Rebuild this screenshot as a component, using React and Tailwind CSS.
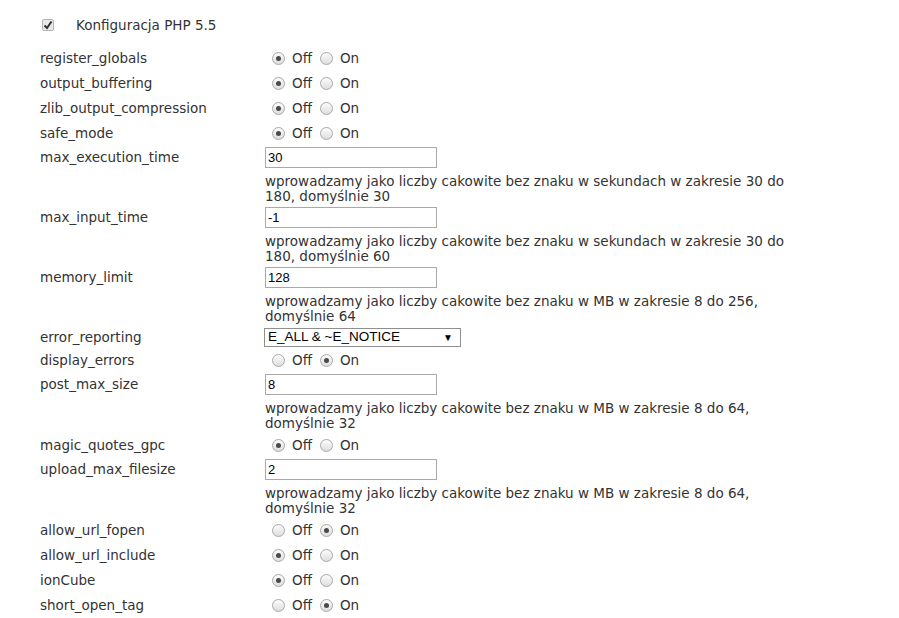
const radios = {
  register_globals: 'off',
  output_buffering: 'off',
  zlib_output_compression: 'off',
  safe_mode: 'off',
};

function Radio({ checked }) {
  return (
    <span className="flex w-[13px] h-[13px] rounded-full border border-[#a9a9a9] bg-gradient-to-b from-[#fcfcfc] to-[#dedede] items-center justify-center">
      {checked && <span className="w-[5px] h-[5px] rounded-full bg-[#4a4a4a]" />}
    </span>
  );
}

function RadioRow({ label, value }) {
  return (
    <div className="flex h-[25px] items-center">
      <div className="w-[225px]">{label}</div>
      <div className="flex items-center">
        <span className="ml-[7px] flex"><Radio checked={value === 'off'} /></span>
        <span className="ml-[7px]">Off</span>
        <span className="ml-[8px] flex"><Radio checked={value === 'on'} /></span>
        <span className="ml-[7px]">On</span>
      </div>
    </div>
  );
}

function InputRow({ label, value, help }) {
  return (
    <div className="flex pt-[1px] pb-[2px]">
      <div className="w-[225px] h-[21px] flex items-center">{label}</div>
      <div>
        <input
          readOnly
          value={value}
          className="block w-[172px] h-[21px] border border-[#a9a9a9] px-[2px] text-[13px] text-black outline-none font-['Liberation_Sans',Arial,sans-serif]"
        />
        <div className="mt-[6px] leading-[15px]">
          {help.map((line, i) => (
            <div key={i}>{line}</div>
          ))}
        </div>
      </div>
    </div>
  );
}

export default function App() {
  return (
    <div className="bg-white min-h-[618px] pl-[40px] pt-[12px] text-[13.5px] text-[#333] font-['DejaVu_Sans',Verdana,sans-serif]">
      <div className="flex h-[26px] items-center mb-[8px]">
        <span className="ml-[2px] w-[12px] h-[12px] rounded-[2px] border border-[#b5b5b5] bg-[#e9e9e9] flex items-center justify-center">
          <svg width="10" height="10" viewBox="0 0 10 10">
            <path d="M1.5 5.5 L4 8 L8.5 1.5" stroke="#333" strokeWidth="2" fill="none" />
          </svg>
        </span>
        <span className="ml-[22px]">Konfiguracja PHP 5.5</span>
      </div>

      {Object.entries(radios).map(([k, v]) => (
        <RadioRow key={k} label={k} value={v} />
      ))}

      <InputRow
        label="max_execution_time"
        value="30"
        help={['wprowadzamy jako liczby cakowite bez znaku w sekundach w zakresie 30 do', '180, domyślnie 30']}
      />
      <InputRow
        label="max_input_time"
        value="-1"
        help={['wprowadzamy jako liczby cakowite bez znaku w sekundach w zakresie 30 do', '180, domyślnie 60']}
      />
      <InputRow
        label="memory_limit"
        value="128"
        help={['wprowadzamy jako liczby cakowite bez znaku w MB w zakresie 8 do 256,', 'domyślnie 64']}
      />

      <div className="flex h-[22px] items-center">
        <div className="w-[224px]">error_reporting</div>
        <div className="w-[197px] h-[19px] border border-[#8f8f8f] flex items-center justify-between pl-[3px] pr-[7px] text-[13.5px] text-black font-['Liberation_Sans',Arial,sans-serif]">
          <span>E_ALL &amp; ~E_NOTICE</span>
          <span className="text-[10px]">▼</span>
        </div>
      </div>

      <RadioRow label="display_errors" value="on" />
      <InputRow
        label="post_max_size"
        value="8"
        help={['wprowadzamy jako liczby cakowite bez znaku w MB w zakresie 8 do 64,', 'domyślnie 32']}
      />
      <RadioRow label="magic_quotes_gpc" value="off" />
      <InputRow
        label="upload_max_filesize"
        value="2"
        help={['wprowadzamy jako liczby cakowite bez znaku w MB w zakresie 8 do 64,', 'domyślnie 32']}
      />
      <RadioRow label="allow_url_fopen" value="on" />
      <RadioRow label="allow_url_include" value="off" />
      <RadioRow label="ionCube" value="off" />
      <RadioRow label="short_open_tag" value="on" />
    </div>
  );
}
